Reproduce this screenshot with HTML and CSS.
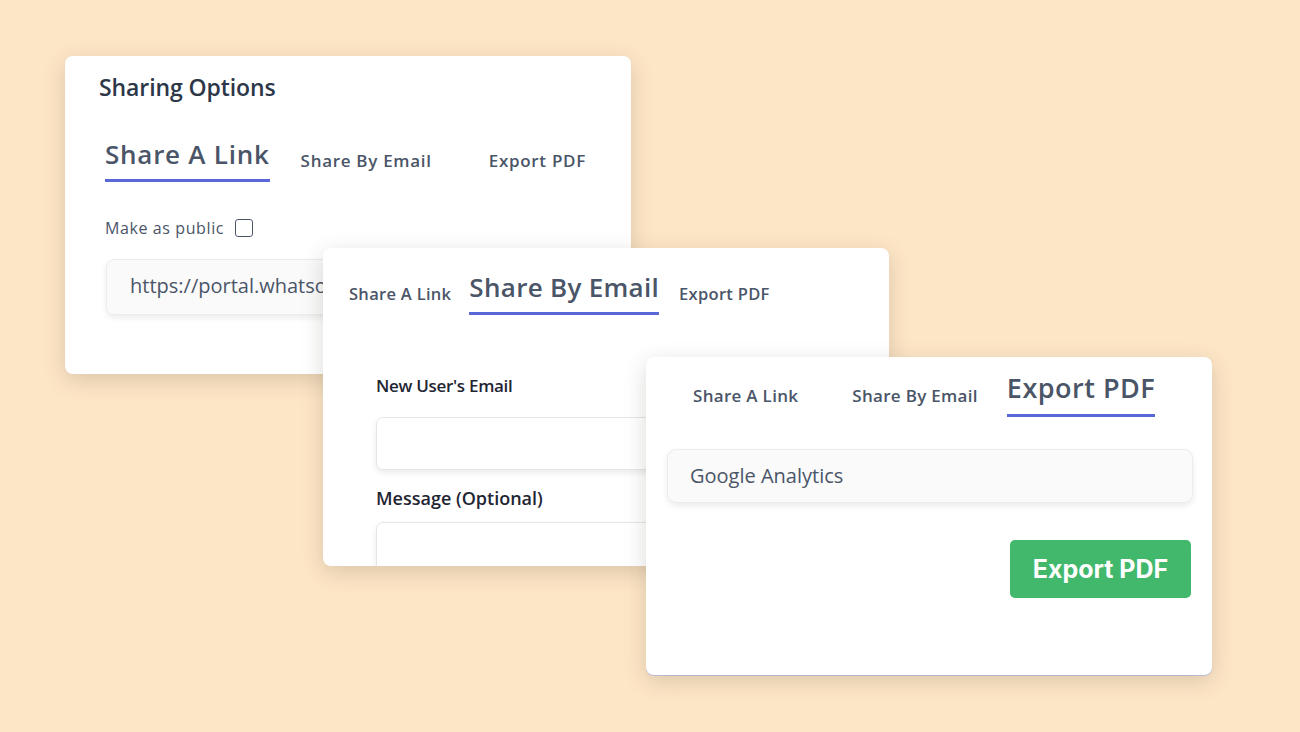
FILE: index.html
```html
<!DOCTYPE html>
<html lang="en">
<head>
    <meta charset="UTF-8">
    <meta name="viewport" content="width=device-width, initial-scale=1.0">
    <title>Sharing Options</title>
    <link rel="stylesheet" href="styles.css">
</head>
<body>
    <div class="stage">
        <!-- Card 1: share a link -->
        <div class="card card-link">
            <h2 class="card-title">Sharing Options</h2>
            <div class="tabs">
                <a href="#" class="tab active">Share A Link</a>
                <a href="#" class="tab">Share By Email</a>
                <a href="#" class="tab">Export PDF</a>
            </div>
            <label class="public">Make as public <span class="checkbox"></span></label>
            <div class="field field-url">https://portal.whatsonboard.com/share/report/7f3a91</div>
        </div>

        <!-- Card 2: share by email -->
        <div class="card card-email">
            <div class="tabs">
                <a href="#" class="tab">Share A Link</a>
                <a href="#" class="tab active">Share By Email</a>
                <a href="#" class="tab">Export PDF</a>
            </div>
            <div class="form">
                <label class="form-label">New User's Email</label>
                <div class="field field-plain"></div>
                <label class="form-label form-label-lg">Message (Optional)</label>
                <div class="field field-plain field-tall"></div>
            </div>
        </div>

        <!-- Card 3: export pdf -->
        <div class="card card-pdf">
            <div class="tabs">
                <a href="#" class="tab">Share A Link</a>
                <a href="#" class="tab">Share By Email</a>
                <a href="#" class="tab active">Export PDF</a>
            </div>
            <div class="field field-select">Google Analytics</div>
            <div class="actions">
                <button class="btn-export">Export PDF</button>
            </div>
        </div>
    </div>
</body>
</html>
```

FILE: styles.css
```css
body {
    margin: 0;
    padding: 0;
    background-color: #fde6c6;
    font-family: "Open Sans", "Noto Sans", sans-serif;
    color: #4a5568;
}
.stage {
    position: relative;
    width: 1300px;
    height: 732px;
    overflow: hidden;
}
.card {
    position: absolute;
    width: 566px;
    height: 318px;
    background-color: #fff;
    border-radius: 8px;
    box-shadow: 0 6px 22px rgba(60, 50, 40, 0.18);
    box-sizing: border-box;
    overflow: hidden;
}
.card-link {
    left: 65px;
    top: 56px;
    padding: 14px 0 0 34px;
}
.card-email {
    left: 323px;
    top: 248px;
    padding: 21px 0 0 26px;
}
.card-pdf {
    left: 646px;
    top: 357px;
    padding: 13px 19px 0 21px;
    box-shadow: 0 6px 22px rgba(60, 50, 40, 0.18), 0 1px 0 #c9cbe8;
}
.card-title {
    margin: 0;
    font-size: 23px;
    font-weight: 600;
    line-height: 34px;
    color: #2d3748;
    letter-spacing: -0.1px;
}

/* tabs */
.tabs {
    display: flex;
    align-items: flex-end;
}
.tab {
    color: #4a5568;
    text-decoration: none;
    font-size: 17px;
    line-height: 24px;
    font-weight: 600;
    letter-spacing: 0.3px;
    padding-bottom: 9px;
}
.tab.active {
    font-size: 26px;
    line-height: 36px;
    font-weight: 600;
    letter-spacing: 0.3px;
    padding-bottom: 7px;
    border-bottom: 3px solid #5a67d8;
}
.card-link .tabs {
    margin: 32px 0 0 6px;
    gap: 31px;
}
.card-link .tab {
    letter-spacing: 0.7px;
}
.card-link .tab.active {
    letter-spacing: 0.75px;
}
.card-link .tab:last-child {
    margin-left: 26px;
}
.card-email .tabs {
    gap: 18px;
}
.card-email .tab {
    font-size: 16.5px;
}
.card-email .tab.active {
    font-size: 26px;
}
.card-email .tab:last-child {
    margin-left: 2px;
}
.card-pdf .tabs {
    margin-left: 26px;
    gap: 54px;
}
.card-pdf .tab.active {
    font-size: 27px;
    letter-spacing: 0.5px;
    padding-bottom: 8px;
}
.card-pdf .tab:last-child {
    margin-left: -25px;
}

.public {
    display: flex;
    align-items: center;
    margin: 35px 0 0 6px;
    font-size: 16px;
    line-height: 22px;
    letter-spacing: 0.6px;
    color: #4a5568;
}
.checkbox {
    display: inline-block;
    width: 16px;
    height: 16px;
    margin-left: 11px;
    border: 1.5px solid #4a5568;
    border-radius: 3px;
}
.field {
    box-sizing: border-box;
    background-color: #fafafa;
    border: 1px solid #ececec;
    border-radius: 8px;
    box-shadow: 0 3px 6px rgba(0, 0, 0, 0.08);
    font-size: 20px;
    color: #4a5568;
    white-space: nowrap;
    overflow: hidden;
}
.field-url {
    width: 484px;
    height: 56px;
    margin: 20px 0 0 7px;
    padding: 12px 23px;
}
.form {
    padding: 59px 0 0 27px;
}
.form-label {
    display: block;
    font-size: 17px;
    line-height: 24px;
    font-weight: 600;
    color: #1f2533;
    letter-spacing: -0.3px;
}
.form-label-lg {
    font-size: 18px;
    letter-spacing: 0;
}
.field-plain {
    width: 460px;
    height: 53px;
    margin: 19px 0 16px;
    background-color: #fff;
    border-color: #e6e6e6;
    border-radius: 7px;
}
.field-tall {
    height: 100px;
    margin-top: 12px;
}
.field-select {
    width: 100%;
    height: 54px;
    margin-top: 32px;
    padding: 12px 22px;
    border-radius: 9px;
}
.actions {
    display: flex;
    justify-content: flex-end;
    margin-top: 37px;
    padding-right: 2px;
}
.btn-export {
    width: 181px;
    height: 58px;
    border: none;
    border-radius: 5px;
    background-color: #41b86c;
    color: #fff;
    font-family: Inter, Roboto, sans-serif;
    font-size: 25px;
    font-weight: 700;
    cursor: pointer;
}
```
